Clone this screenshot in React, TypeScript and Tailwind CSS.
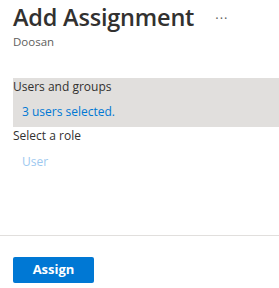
export default function App() {
  return (
    <div className="w-[279px] h-[288px] bg-white flex flex-col font-['Open_Sans',sans-serif] text-[#323130]">
      <div className="pl-[13px] pt-[2px] flex items-start">
        <div>
          <h1 className="text-[23.5px] leading-[30px] font-semibold tracking-[-0.2px]">Add Assignment</h1>
          <p className="text-[11.5px] leading-[16px] text-[#605e5c] mt-[2px]">Doosan</p>
        </div>
        <span className="ml-[21px] mt-[5px] text-[13px] leading-[14px] text-[#605e5c] tracking-[1px]">...</span>
      </div>
      <div className="mt-[28px] ml-[13px] bg-[#e1dfdd] h-[49px] flex flex-col">
        <span className="text-[12px] leading-[16px] mt-[1px]">Users and groups</span>
        <span className="text-[12px] leading-[16px] mt-[9px] pl-[9px] text-[#0078d4]">3 users selected.</span>
      </div>
      <div className="pl-[13px] text-[12px] leading-[16px] mt-[1px]">Select a role</div>
      <div className="pl-[22px] text-[12px] leading-[16px] mt-[10px] text-[#9ec9f0]">User</div>
      <div className="mt-auto border-t border-[#e1dfdd] h-[53px] pl-[13px] pt-[20px]">
        <button className="w-[81px] h-[26px] bg-[#0078d4] rounded-[2px] text-white text-[13px] font-bold">Assign</button>
      </div>
    </div>
  );
}
